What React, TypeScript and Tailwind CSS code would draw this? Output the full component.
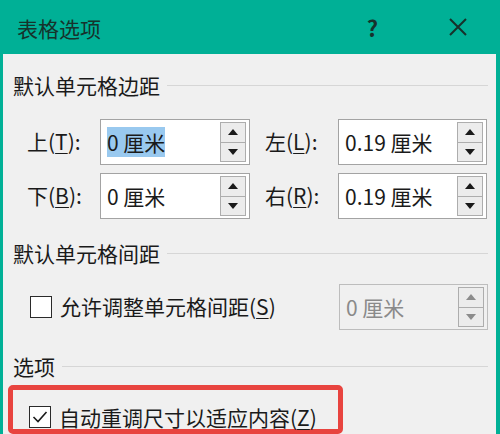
import React from 'react';

const font = { fontFamily: '"Noto Sans CJK SC", "Noto Sans", sans-serif' };

function Acc({ k }: { k: string }) {
  return (
    <>
      (<span className="underline underline-offset-[3px] decoration-1">{k}</span>)
    </>
  );
}

function Arrow({ up, muted }: { up?: boolean; muted?: boolean }) {
  return (
    <svg width="10" height="6" viewBox="0 0 10 6">
      <path d={up ? 'M5 0 L10 6 L0 6 Z' : 'M0 0 L10 0 L5 6 Z'} fill={muted ? '#8c8c8c' : '#1a1a1a'} />
    </svg>
  );
}

function Spinner({ muted }: { muted?: boolean }) {
  return (
    <div className="flex flex-col w-[26px] h-[40px] ml-auto mr-[3px]">
      <div className="flex-1 flex items-center justify-center border border-[#adadad] bg-[#ececec]">
        <Arrow up muted={muted} />
      </div>
      <div className="flex-1 flex items-center justify-center border border-t-0 border-[#adadad] bg-[#ececec]">
        <Arrow muted={muted} />
      </div>
    </div>
  );
}

function NumInput({ value, w, selected, disabled }: { value: string; w: string; selected?: boolean; disabled?: boolean }) {
  return (
    <div
      className={`flex items-center h-[46px] border ${w} ${
        disabled ? 'border-[#bdbdbd] bg-[#f0f0f0] text-[#8a8a8a]' : 'border-[#a3a3a3] bg-white text-[#1a1a1a]'
      }`}
    >
      <span className={`ml-[6px] leading-[30px] whitespace-pre ${selected ? 'bg-[#99c9ef]' : ''}`}>{value}</span>
      <Spinner muted={disabled} />
    </div>
  );
}

function Section({ title, mt }: { title: string; mt: string }) {
  return (
    <div className={`flex items-center h-[28px] pl-[10px] pr-[8px] ${mt}`}>
      <span className="leading-[28px]">{title}</span>
      <div className="flex-1 h-px bg-[#d6d6d6] ml-[7px]" />
    </div>
  );
}

function Checkbox({ checked }: { checked?: boolean }) {
  return (
    <div className="w-[22px] h-[22px] border-[1.5px] border-[#2a2a2a] bg-white flex items-center justify-center shrink-0">
      {checked && (
        <svg width="16" height="14" viewBox="0 0 16 14">
          <path d="M1.5 7 L6 11.5 L14.5 2" fill="none" stroke="#1a1a1a" strokeWidth="1.6" />
        </svg>
      )}
    </div>
  );
}

export default function App() {
  return (
    <div className="w-[500px] h-[434px] overflow-hidden bg-[#00b096] text-[21px] text-[#1a1a1a]" style={font}>
      <div className="flex items-center h-[54px] pl-[17px] text-[#16332c]">
        <span className="leading-none mt-[2px]">表格选项</span>
        <span className="ml-auto mr-[70px] text-[22px] font-bold text-[#17312b]">?</span>
        <svg width="20" height="20" viewBox="0 0 20 20" className="mr-[32px]">
          <path d="M2 2 L18 18 M18 2 L2 18" stroke="#17312b" strokeWidth="2" />
        </svg>
      </div>
      <div className="ml-[3px] mr-[4px] h-[380px] bg-[#f0f0f0] flex flex-col">
        <Section title="默认单元格边距" mt="mt-[17px]" />

        <div className="flex items-center pl-[24px] mt-[20px]">
          <span className="w-[73px]">
            上<Acc k="T" />:
          </span>
          <NumInput value="0 厘米" w="w-[150px]" selected />
          <span className="w-[73px] ml-[15px]">
            左<Acc k="L" />:
          </span>
          <NumInput value="0.19 厘米" w="w-[149px]" />
        </div>
        <div className="flex items-center pl-[24px] mt-[8px]">
          <span className="w-[73px]">
            下<Acc k="B" />:
          </span>
          <NumInput value="0 厘米" w="w-[150px]" />
          <span className="w-[73px] ml-[15px]">
            右<Acc k="R" />:
          </span>
          <NumInput value="0.19 厘米" w="w-[149px]" />
        </div>

        <Section title="默认单元格间距" mt="mt-[20px]" />

        <div className="flex items-center pl-[27px] mt-[17px]">
          <Checkbox />
          <span className="ml-[8px]">
            允许调整单元格间距<Acc k="S" />
          </span>
          <div className="ml-auto mr-[8px]">
            <NumInput value="0 厘米" w="w-[149px]" disabled />
          </div>
        </div>

        <Section title="选项" mt="mt-[22px]" />

        <div className="ml-[5px] mt-[5px] w-[335px] h-[80px] border-[5px] border-[#e8443f] rounded-[5px] pl-[16px] pt-[16px]">
          <div className="flex items-center">
            <Checkbox checked />
            <span className="ml-[8px] leading-[22px]">
              自动重调尺寸以适应内容<Acc k="Z" />
            </span>
          </div>
        </div>
      </div>
    </div>
  );
}
